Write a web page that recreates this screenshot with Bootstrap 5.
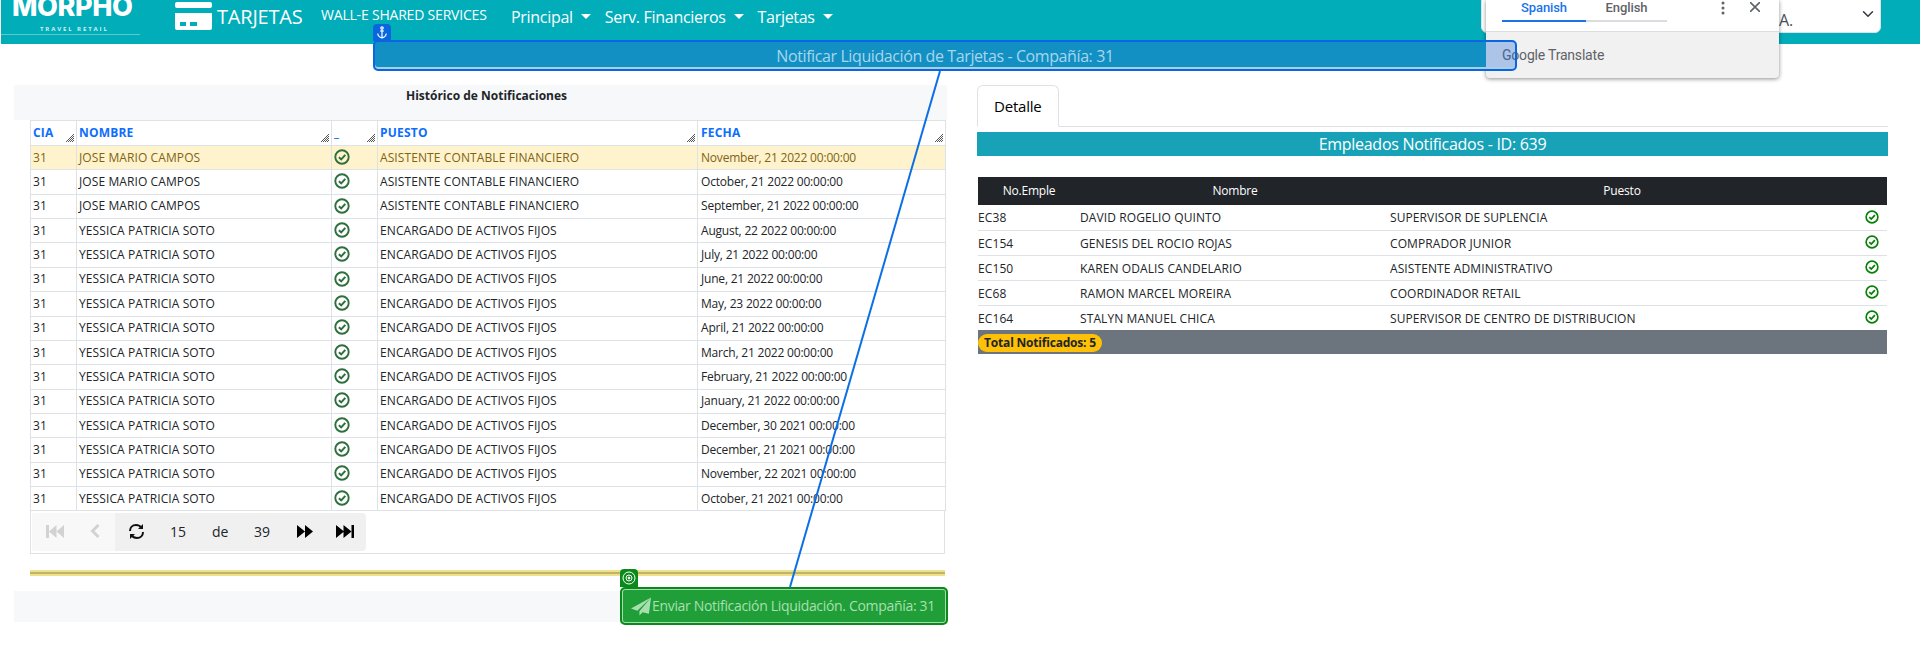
<!DOCTYPE html>
<html lang="es">
<head>
<meta charset="utf-8">
<title>Tarjetas</title>
<link href="https://cdn.jsdelivr.net/npm/bootstrap@5.3.0/dist/css/bootstrap.min.css" rel="stylesheet">
<style>
html,body{height:645px;overflow:hidden;background:#fff}
body{font-family:"Open Sans","Liberation Sans",sans-serif;position:relative;letter-spacing:-.2px}
.topbar{height:44px;margin-left:1px;background:#00adb9;overflow:hidden;padding:0;flex-wrap:nowrap;align-items:flex-start;justify-content:flex-start}
.logo-box{width:139px;height:35px;border-bottom:1px solid #5cc9d0;color:#fff;flex:none;overflow:hidden}
.logo-main{font:800 27px/33px Inter,sans-serif;letter-spacing:-.4px;margin-top:-10px;padding-left:11px;white-space:nowrap}
.logo-sub{font:700 6px/8px "Open Sans",sans-serif;letter-spacing:1.9px;color:#d5f0f2;margin-top:2px;padding-left:39px;white-space:nowrap}
.card-ico{margin:2px 5px 0 35px;flex:none}
.brand-txt{font-size:20px;line-height:27px;color:#fff;margin-top:3px;width:104px;flex:none}
.top-links{font-size:14px;line-height:20px;color:#fff;margin-top:5px;width:190px;flex:none;white-space:nowrap}
.topbar .nav-link{color:#fff;font-size:16px;padding:0;margin-top:5px;line-height:24px;letter-spacing:-.3px}
.topbar .dropdown-toggle::after{margin-left:8px;border-top-width:5px;border-left-width:5px;border-right-width:5px}
.topbar .nav-item{margin-right:14px}
.co-select{position:absolute;right:39px;top:-5px;width:400px;height:38px;font-size:16px;text-align:right;padding:14px 87px 0 0;line-height:20px;color:#495057;border-radius:6px;background-position:right 4px center}
.bar-sel{position:relative;z-index:5;margin:-4px 0 0 373px;width:1144px;height:31px;border:2px solid #0a66e0;border-radius:5px;text-align:center;color:#a8d6ec;font-size:16px;line-height:28px;letter-spacing:-.4px;background:linear-gradient(90deg,#1290c4 1111px,rgba(30,105,215,.33) 1111px);box-shadow:inset 0 -2px 0 #a8cfe8}
.tag-anchor{position:absolute;left:-2px;top:-18px;width:18px;height:17px;background:#0a66e0;border-radius:4px 4px 0 0;display:flex;align-items:center;justify-content:center}
.gt-popup{position:absolute;z-index:4;left:1486px;top:0;width:293px;height:78px;background:#f1f1f1;border-radius:0 0 4px 4px;box-shadow:0 1px 4px rgba(0,0,0,.45);font-family:Roboto,sans-serif;letter-spacing:0}
.gt-head{height:32px;background:#fff;border-bottom:1px solid #dadce0;position:relative}
.gt-tab{position:absolute;top:0;height:22px;font-size:13px;font-weight:500;line-height:15px;letter-spacing:-.1px;color:#5f6368;text-align:center;border-bottom:2px solid #dadce0}
.gt-on{color:#1a73e8;border-bottom-color:#1a73e8}
.gt-dots{position:absolute;left:235px;top:1px}
.gt-x{position:absolute;left:264px;top:2px}
.gt-foot{padding:15px 0 0 16px;font-size:14px;line-height:17px;color:#5f6368;letter-spacing:-.2px}
.page-row{margin-top:14px;align-items:flex-start}
.col-left{width:933px;margin-left:14px;flex:none}
.col-right{width:911px;margin-left:30px;flex:none}
.hist-head{height:35px;background:#f7f8f9;text-align:center;font-size:12px;font-weight:700;line-height:18px;padding:2px 0 0 12px;color:#212529;letter-spacing:0}
.hist-wrap{padding:0 2px 0 16px}
.hist-table{table-layout:fixed;width:915px;margin:0;font-size:12px;border-color:#dee2e6;color:#212529;letter-spacing:.1px}
.hist-table th{height:25px;padding:3px 2px 0;color:#0d6efd;font-weight:700;line-height:18px;vertical-align:top;position:relative;letter-spacing:.2px}
.hist-table td{height:24.36px;padding:0 2px;line-height:20px;vertical-align:middle;white-space:nowrap;overflow:hidden}
.hist-table td:last-child{padding-left:3px;letter-spacing:-.2px}
.hist-table th:last-child{padding-left:3px}
.hist-table tr.row-sel td{background:#fff3cd;color:#806411;box-shadow:none}
.hist-table td.ok-cell{padding:2px 0 0 2px;line-height:16px;vertical-align:top}
.grip{position:absolute;right:2px;bottom:3px}
.c-a{width:46px}.c-b{width:255px}.c-c{width:46px}.c-d{width:320px}.c-e{width:248px}
.pager-wrap{width:915px;height:43px;border:1px solid #dee2e6;border-top:0;padding-top:2px}
.pager{width:334px;height:38px;margin-left:1px;border-radius:4px;overflow:hidden;background:#f0f0f0;font-size:14px;letter-spacing:0}
.pager-off{width:83px;height:38px;background:#f8f8f8;flex:none;position:relative}
.pg-i{position:absolute}
.pg-main{position:relative;flex:1;height:38px}
.pg-n{position:absolute;top:9px;line-height:20px;color:#212529}
.rule{height:6px;margin:16px 2px 0 16px;background:#bfb46a;border:solid #eee18a;border-width:2px 0}
.foot-strip{height:31px;margin-top:15px;background:#f7f8f9;position:relative}
.send-btn{position:absolute;right:-1px;top:-4px;width:328px;height:38px;padding:0 0 0 9px;text-align:left;background:#209f39;color:#a8dfb0;font-size:14px;line-height:32px;border:2px solid #0a8a1a;border-radius:5px;box-shadow:inset 0 0 0 1px #a5dcae;letter-spacing:-.32px;white-space:nowrap}
.send-btn:hover{background:#209f39;color:#a8dfb0;border-color:#0a8a1a}
.tag-target{position:absolute;left:-2px;top:-20px;width:18px;height:18px;background:#0a8a1a;border-radius:4px 4px 0 0;display:flex;align-items:center;justify-content:center}
.plane{vertical-align:-5px;margin-right:1px}
.detail-tabs .nav-link{color:#495057;font-size:15px;padding:0 16px;height:42px;line-height:40px}
.detail-tabs{height:42px}
.teal-title{height:24px;margin-top:5px;background:#17a2b8;color:#fff;text-align:center;font-size:16px;line-height:25px;letter-spacing:-.28px}
.emp-table{table-layout:fixed;width:909px;margin:21px 0 0 1px;font-size:12px;color:#212529;letter-spacing:.1px}
.emp-table th{height:27px;padding:0;font-weight:500;text-align:center;line-height:28px;background:#212529;color:#fff;border:0;letter-spacing:-.2px}
.emp-table td{height:25px;padding:2px 0 0;line-height:20px;vertical-align:middle;white-space:nowrap;border-color:#dee2e6}
.emp-table td.ok-cell{text-align:right;padding:4px 8px 0 0;line-height:14px;vertical-align:top}
.e-a{width:102px}.e-b{width:310px}.e-c{width:464px}.e-d{width:33px}
.emp-foot{width:909px;height:24px;margin-left:1px;background:#6c757d;padding-top:4px;margin-top:-1px}
.emp-foot .badge{display:block;width:124px;height:18px;padding:0;background:#ffc107;color:#212529;font-size:12px;font-weight:700;line-height:18px;letter-spacing:-.2px}
.link-line{position:absolute;z-index:6;left:0;top:0;pointer-events:none}
.ok-l{color:#2e6f3e}.ok-r{color:#068006}
</style>
</head>
<body>
<svg width="0" height="0" class="d-block">
  <symbol id="chk" viewBox="0 0 16 16"><circle cx="8" cy="8" r="6.7" fill="none" stroke="currentColor" stroke-width="1.9"/><path d="M4.900 8.200 7.200 10.400 11.300 5.800" fill="none" stroke="currentColor" stroke-width="2"/></symbol>
  <symbol id="grp" viewBox="0 0 8 8"><path d="M0 8 8 0M2 8 8 2M4 8 8 4M6 8 8 6" stroke="#444" stroke-width=".9"/></symbol>
</svg>

<nav class="navbar topbar">
  <div class="logo-box"><div class="logo-main">MORPHO</div><div class="logo-sub">TRAVEL RETAIL</div></div>
  <svg class="card-ico" width="37" height="28" viewBox="0 0 37 28"><rect width="37" height="6" rx="2" fill="#fff"/><path d="M0 11H37V26a2 2 0 0 1-2 2H2a2 2 0 0 1-2-2Z" fill="#fff"/><rect x="5" y="20" width="6" height="4" fill="#00adb9"/><rect x="15" y="20" width="7" height="4" fill="#00adb9"/></svg>
  <div class="brand-txt">TARJETAS</div>
  <div class="top-links">WALL-E SHARED SERVICES</div>
  <ul class="nav flex-nowrap">
    <li class="nav-item"><a class="nav-link dropdown-toggle" href="#">Principal</a></li>
    <li class="nav-item"><a class="nav-link dropdown-toggle" href="#">Serv. Financieros</a></li>
    <li class="nav-item"><a class="nav-link dropdown-toggle" href="#">Tarjetas</a></li>
  </ul>
  <div class="form-select co-select">S.A.</div>
</nav>

<div class="gt-popup">
  <div class="gt-head">
    <div class="gt-tab gt-on" style="left:16px;width:84px">Spanish</div>
    <div class="gt-tab" style="left:100px;width:81px">English</div>
    <svg class="gt-dots" width="4" height="14" viewBox="0 0 4 14" fill="#5f6368"><circle cx="2" cy="2" r="1.5"/><circle cx="2" cy="7" r="1.5"/><circle cx="2" cy="12" r="1.5"/></svg>
    <svg class="gt-x" width="10" height="10" viewBox="0 0 10 10"><path d="M0 0 10 10M10 0 0 10" stroke="#5f6368" stroke-width="1.6"/></svg>
  </div>
  <div class="gt-foot">Google Translate</div>
</div>

<div class="bar-sel">
  <span class="tag-anchor"><svg width="10" height="13" viewBox="0 0 10 13" fill="none" stroke="#fff" stroke-width="1.2"><circle cx="5" cy="2" r="1.2"/><path d="M5 3.200V12M3 5H7M.7 7.500C1 10.500 3.500 11.500 5 12 6.500 11.500 9 10.500 9.300 7.500"/></svg></span>
  Notificar Liquidación de Tarjetas - Compañía: 31
</div>

<div class="d-flex page-row">
  <div class="col-left">
    <div class="hist-head">Histórico de Notificaciones</div>
    <div class="hist-wrap">
      <table class="table table-bordered hist-table">
        <colgroup><col class="c-a"><col class="c-b"><col class="c-c"><col class="c-d"><col class="c-e"></colgroup>
        <thead><tr>
          <th>CIA<svg class="grip" width="8" height="8"><use href="#grp"/></svg></th>
          <th>NOMBRE<svg class="grip" width="8" height="8"><use href="#grp"/></svg></th>
          <th>_<svg class="grip" width="8" height="8"><use href="#grp"/></svg></th>
          <th>PUESTO<svg class="grip" width="8" height="8"><use href="#grp"/></svg></th>
          <th>FECHA<svg class="grip" width="8" height="8"><use href="#grp"/></svg></th>
        </tr></thead>
        <tbody>
          <tr class="row-sel"><td>31</td><td>JOSE MARIO CAMPOS</td><td class="ok-cell"><svg class="ok-l" width="16" height="16"><use href="#chk"/></svg></td><td>ASISTENTE CONTABLE FINANCIERO</td><td>November, 21 2022 00:00:00</td></tr>
          <tr><td>31</td><td>JOSE MARIO CAMPOS</td><td class="ok-cell"><svg class="ok-l" width="16" height="16"><use href="#chk"/></svg></td><td>ASISTENTE CONTABLE FINANCIERO</td><td>October, 21 2022 00:00:00</td></tr>
          <tr><td>31</td><td>JOSE MARIO CAMPOS</td><td class="ok-cell"><svg class="ok-l" width="16" height="16"><use href="#chk"/></svg></td><td>ASISTENTE CONTABLE FINANCIERO</td><td>September, 21 2022 00:00:00</td></tr>
          <tr><td>31</td><td>YESSICA PATRICIA SOTO</td><td class="ok-cell"><svg class="ok-l" width="16" height="16"><use href="#chk"/></svg></td><td>ENCARGADO DE ACTIVOS FIJOS</td><td>August, 22 2022 00:00:00</td></tr>
          <tr><td>31</td><td>YESSICA PATRICIA SOTO</td><td class="ok-cell"><svg class="ok-l" width="16" height="16"><use href="#chk"/></svg></td><td>ENCARGADO DE ACTIVOS FIJOS</td><td>July, 21 2022 00:00:00</td></tr>
          <tr><td>31</td><td>YESSICA PATRICIA SOTO</td><td class="ok-cell"><svg class="ok-l" width="16" height="16"><use href="#chk"/></svg></td><td>ENCARGADO DE ACTIVOS FIJOS</td><td>June, 21 2022 00:00:00</td></tr>
          <tr><td>31</td><td>YESSICA PATRICIA SOTO</td><td class="ok-cell"><svg class="ok-l" width="16" height="16"><use href="#chk"/></svg></td><td>ENCARGADO DE ACTIVOS FIJOS</td><td>May, 23 2022 00:00:00</td></tr>
          <tr><td>31</td><td>YESSICA PATRICIA SOTO</td><td class="ok-cell"><svg class="ok-l" width="16" height="16"><use href="#chk"/></svg></td><td>ENCARGADO DE ACTIVOS FIJOS</td><td>April, 21 2022 00:00:00</td></tr>
          <tr><td>31</td><td>YESSICA PATRICIA SOTO</td><td class="ok-cell"><svg class="ok-l" width="16" height="16"><use href="#chk"/></svg></td><td>ENCARGADO DE ACTIVOS FIJOS</td><td>March, 21 2022 00:00:00</td></tr>
          <tr><td>31</td><td>YESSICA PATRICIA SOTO</td><td class="ok-cell"><svg class="ok-l" width="16" height="16"><use href="#chk"/></svg></td><td>ENCARGADO DE ACTIVOS FIJOS</td><td>February, 21 2022 00:00:00</td></tr>
          <tr><td>31</td><td>YESSICA PATRICIA SOTO</td><td class="ok-cell"><svg class="ok-l" width="16" height="16"><use href="#chk"/></svg></td><td>ENCARGADO DE ACTIVOS FIJOS</td><td>January, 21 2022 00:00:00</td></tr>
          <tr><td>31</td><td>YESSICA PATRICIA SOTO</td><td class="ok-cell"><svg class="ok-l" width="16" height="16"><use href="#chk"/></svg></td><td>ENCARGADO DE ACTIVOS FIJOS</td><td>December, 30 2021 00:00:00</td></tr>
          <tr><td>31</td><td>YESSICA PATRICIA SOTO</td><td class="ok-cell"><svg class="ok-l" width="16" height="16"><use href="#chk"/></svg></td><td>ENCARGADO DE ACTIVOS FIJOS</td><td>December, 21 2021 00:00:00</td></tr>
          <tr><td>31</td><td>YESSICA PATRICIA SOTO</td><td class="ok-cell"><svg class="ok-l" width="16" height="16"><use href="#chk"/></svg></td><td>ENCARGADO DE ACTIVOS FIJOS</td><td>November, 22 2021 00:00:00</td></tr>
          <tr><td>31</td><td>YESSICA PATRICIA SOTO</td><td class="ok-cell"><svg class="ok-l" width="16" height="16"><use href="#chk"/></svg></td><td>ENCARGADO DE ACTIVOS FIJOS</td><td>October, 21 2021 00:00:00</td></tr>
        </tbody>
      </table>
      <div class="pager-wrap">
        <div class="pager d-flex">
          <div class="pager-off">
            <svg class="pg-i" style="left:14px;top:12px" width="18" height="13" viewBox="0 0 18 13" fill="#d2d2d4"><rect width="3" height="13"/><path d="M10.500 0V13L3 6.500ZM18 0V13L10.500 6.500Z"/></svg>
            <svg class="pg-i" style="left:58px;top:11px" width="10" height="14" viewBox="0 0 10 14" fill="none" stroke="#d2d2d4" stroke-width="3"><path d="M8.500 1 2.500 7 8.500 13"/></svg>
          </div>
          <div class="pg-main">
            <svg class="pg-i" style="left:13px;top:10px" width="17" height="17" viewBox="0 0 17 17" fill="none" stroke="#111" stroke-width="2"><path d="M2 8C2 4.500 4.500 2 8 2C10.500 2 12.500 3.200 13.500 5"/><path d="M15 9C15 12.500 12.500 15 9 15C6.500 15 4.500 13.800 3.500 12"/><path d="M15 1V6H10Z" fill="#111" stroke="none"/><path d="M2 16V11H7Z" fill="#111" stroke="none"/></svg>
            <span class="pg-n" style="left:55px">15</span>
            <span class="pg-n" style="left:97px">de</span>
            <span class="pg-n" style="left:139px">39</span>
            <svg class="pg-i" style="left:182px;top:12px" width="16" height="13" viewBox="0 0 16 13" fill="#000"><path d="M0 0 8 6.500 0 13ZM8 0 16 6.500 8 13Z"/></svg>
            <svg class="pg-i" style="left:221px;top:12px" width="18" height="13" viewBox="0 0 18 13" fill="#000"><path d="M0 0 8 6.500 0 13ZM7.500 0 15.500 6.500 7.500 13Z"/><rect x="15.500" width="2.500" height="13"/></svg>
          </div>
        </div>
      </div>
    </div>
    <div class="rule"></div>
    <div class="foot-strip">
      <button type="button" class="btn send-btn">
        <span class="tag-target"><svg width="14" height="14" viewBox="0 0 14 14" fill="none" stroke="#fff"><circle cx="7" cy="7" r="6"/><circle cx="7" cy="7" r="3"/><circle cx="7" cy="7" r="1" fill="#fff"/></svg></span>
        <svg class="plane" width="20" height="19" viewBox="0 0 19 17" fill="#a8dfb0"><path d="M19 0 0 10.500 6 12.500ZM19 0 8 13V17L11 14 17 15.500Z"/></svg>Enviar Notificación Liquidación. Compañía: 31
      </button>
    </div>
  </div>

  <div class="col-right">
    <ul class="nav nav-tabs detail-tabs"><li class="nav-item"><a class="nav-link active" href="#">Detalle</a></li></ul>
    <div class="teal-title">Empleados Notificados - ID: 639</div>
    <table class="table emp-table mb-0">
      <colgroup><col class="e-a"><col class="e-b"><col class="e-c"><col class="e-d"></colgroup>
      <thead><tr><th>No.Emple</th><th>Nombre</th><th>Puesto</th><th></th></tr></thead>
      <tbody>
        <tr><td>EC38</td><td>DAVID ROGELIO QUINTO</td><td>SUPERVISOR DE SUPLENCIA</td><td class="ok-cell"><svg class="ok-r" width="14" height="14"><use href="#chk"/></svg></td></tr>
        <tr><td>EC154</td><td>GENESIS DEL ROCIO ROJAS</td><td>COMPRADOR JUNIOR</td><td class="ok-cell"><svg class="ok-r" width="14" height="14"><use href="#chk"/></svg></td></tr>
        <tr><td>EC150</td><td>KAREN ODALIS CANDELARIO</td><td>ASISTENTE ADMINISTRATIVO</td><td class="ok-cell"><svg class="ok-r" width="14" height="14"><use href="#chk"/></svg></td></tr>
        <tr><td>EC68</td><td>RAMON MARCEL MOREIRA</td><td>COORDINADOR RETAIL</td><td class="ok-cell"><svg class="ok-r" width="14" height="14"><use href="#chk"/></svg></td></tr>
        <tr><td>EC164</td><td>STALYN MANUEL CHICA</td><td>SUPERVISOR DE CENTRO DE DISTRIBUCION</td><td class="ok-cell"><svg class="ok-r" width="14" height="14"><use href="#chk"/></svg></td></tr>
      </tbody>
    </table>
    <div class="emp-foot"><span class="badge rounded-pill">Total Notificados: 5</span></div>
  </div>
</div>

<svg class="link-line" width="1920" height="645"><line x1="940" y1="71" x2="790" y2="587" stroke="#0b6fe6" stroke-width="2"/></svg>
<script src="https://cdn.jsdelivr.net/npm/bootstrap@5.3.0/dist/js/bootstrap.bundle.min.js"></script>
</body>
</html>
